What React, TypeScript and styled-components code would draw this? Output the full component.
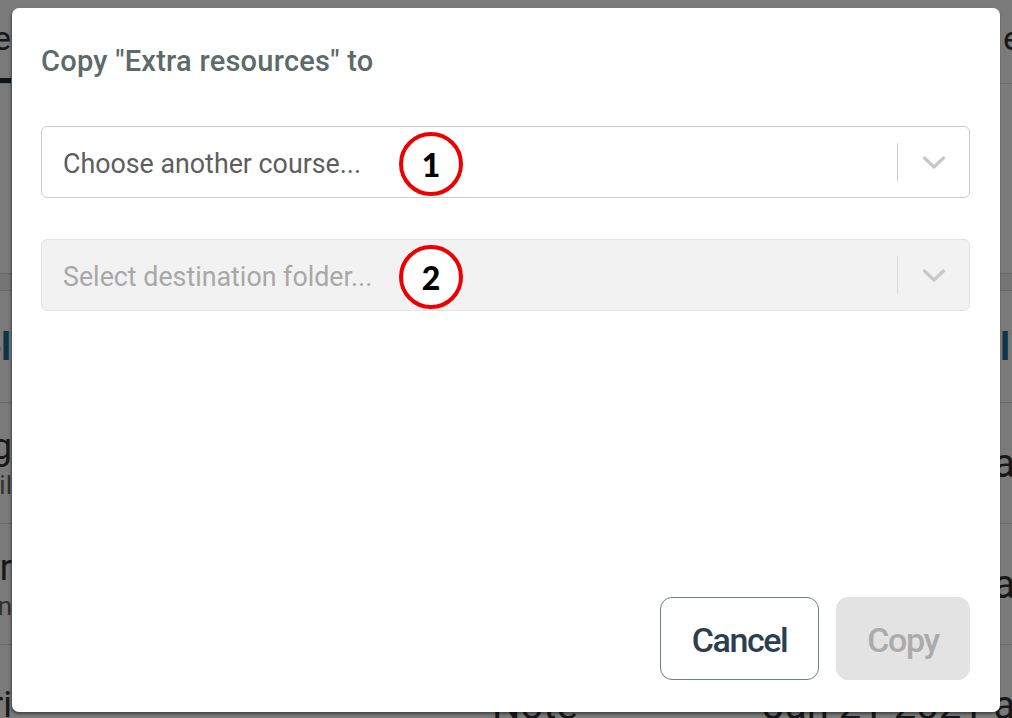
import React from "react";
import styled, { createGlobalStyle } from "styled-components";

const GlobalStyle = createGlobalStyle`
  html, body { margin: 0; padding: 0; width: 1012px; height: 718px; overflow: hidden; background: #ffffff; }
  #root { width: 1012px; height: 718px; }
  * { box-sizing: border-box; }
`;

const Screen = styled.div`
  position: relative;
  width: 1012px;
  height: 718px;
  overflow: hidden;
  background: #ffffff;
  font-family: Roboto, "Liberation Sans", sans-serif;
`;

/* ---------- background page (dimmed) ---------- */
const Page = styled.div`
  display: flex;
  flex-direction: column;
  width: 100%;
`;

const TabBar = styled.div`
  height: 84px;
  display: flex;
  justify-content: space-between;
  align-items: flex-start;
  border-bottom: 1px solid #e2e2e2;
`;

const Tab = styled.div<{ $side: "left" | "right"; $active?: boolean }>`
  width: ${(p) => (p.$side === "left" ? "11px" : "9px")};
  height: 83px;
  display: flex;
  justify-content: ${(p) => (p.$side === "left" ? "flex-end" : "flex-start")};
  align-items: flex-start;
  padding-top: 18px;
  white-space: nowrap;
  font-size: 34px;
  color: #333;
  border-bottom: 5px solid ${(p) => (p.$active ? "#1c2a35" : "transparent")};
`;

const Toolbar = styled.div`
  height: 190px;
  border-bottom: 1px solid #d8d8d8;
`;

const Strip = styled.div`
  height: 17px;
  background: #f4f4f4;
  border-bottom: 1px solid #d8d8d8;
`;

const HeaderRow = styled.div`
  height: 112px;
  display: flex;
  justify-content: space-between;
  align-items: center;
  border-bottom: 1px solid #d8d8d8;
`;

const HeaderCell = styled.div<{ $side: "left" | "right" }>`
  width: ${(p) => (p.$side === "left" ? "11px" : "12px")};
  display: flex;
  justify-content: ${(p) => (p.$side === "left" ? "flex-end" : "flex-start")};
  white-space: nowrap;
  font-size: 38px;
  font-weight: 700;
  color: #1f6e9c;
`;

const Row = styled.div`
  height: 121px;
  display: grid;
  grid-template-columns: 12px 480px 271px 1fr;
  align-items: center;
  border-bottom: 1px solid #d8d8d8;
`;

const NameCell = styled.div`
  display: flex;
  flex-direction: column;
  align-items: flex-end;
  white-space: nowrap;
`;

const NameTitle = styled.span`
  font-size: 36px;
  color: #333;
  line-height: 44px;
`;

const NameSub = styled.span`
  font-size: 26px;
  color: #666;
  line-height: 32px;
`;

const PlainCell = styled.div`
  font-size: 40px;
  color: #333;
  white-space: nowrap;
`;

/* ---------- modal ---------- */
const Overlay = styled.div`
  position: absolute;
  inset: 0;
  background: rgba(0, 0, 0, 0.52);
  display: flex;
  padding: 8px 12px 6px 12px;
`;

const Dialog = styled.div`
  flex: 1;
  background: #ffffff;
  border-radius: 7px;
  box-shadow: -1px 2px 3px rgba(0, 0, 0, 0.45);
  display: flex;
  flex-direction: column;
  padding: 36px 30px 32px 29px;
`;

const Title = styled.h2`
  margin: 0 0 48px;
  font-family: Roboto, "Liberation Sans", sans-serif;
  font-size: 29px;
  line-height: 34px;
  font-weight: 500;
  letter-spacing: 0.25px;
  color: #5c6b69;
`;

const Fields = styled.div`
  display: flex;
  flex-direction: column;
  gap: 41px;
`;

const SelectBox = styled.div<{ $disabled?: boolean }>`
  position: relative;
  height: 72px;
  display: flex;
  align-items: center;
  border: 1px solid ${(p) => (p.$disabled ? "#e4e4e4" : "#cccccc")};
  border-radius: 6px;
  background: ${(p) => (p.$disabled ? "#f2f2f2" : "#ffffff")};
`;

const Placeholder = styled.div<{ $disabled?: boolean }>`
  flex: 1;
  padding: 3px 0 0 21px;
  font-size: 26.8px;
  color: ${(p) => (p.$disabled ? "#a8a8a8" : "#5e5e5e")};
  white-space: nowrap;
`;

const Separator = styled.span<{ $disabled?: boolean }>`
  width: 1px;
  height: 38px;
  background: ${(p) => (p.$disabled ? "#dddddd" : "#cccccc")};
`;

const IndicatorBox = styled.div`
  width: 71px;
  display: flex;
  justify-content: center;
  align-items: center;
  padding-top: 1px;
`;

const Marker = styled.div`
  position: absolute;
  left: 357px;
  top: 5px;
  width: 64px;
  height: 64px;
  border-radius: 50%;
  border: 4px solid #ee0000;
  background: #ffffff;
  display: flex;
  align-items: center;
  justify-content: center;
  font-family: Lato, "Open Sans", sans-serif;
  font-weight: 900;
  font-size: 32px;
  color: #000;
  padding-top: 1px;
`;

const Footer = styled.div`
  margin-top: auto;
  display: flex;
  justify-content: flex-end;
  gap: 17px;
`;

const Button = styled.button<{ $variant: "outline" | "disabled" }>`
  height: 83px;
  width: ${(p) => (p.$variant === "outline" ? "159px" : "134px")};
  border-radius: 12px;
  border: 1px solid ${(p) => (p.$variant === "outline" ? "#6d7d89" : "#e3e3e3")};
  background: ${(p) => (p.$variant === "outline" ? "#ffffff" : "#e3e3e3")};
  color: ${(p) => (p.$variant === "outline" ? "#2b3f4e" : "#ababab")};
  font-family: Roboto, "Liberation Sans", sans-serif;
  font-size: 34px;
  font-weight: 500;
  letter-spacing: -1.4px;
  padding: 0;
  padding-top: 2px;
  cursor: ${(p) => (p.$variant === "outline" ? "pointer" : "default")};
`;

const Chevron: React.FC<{ color: string }> = ({ color }) => (
  <svg width="24" height="15" viewBox="0 0 24 15" fill="none">
    <path d="M2.5 3 L12 12 L21.5 3" stroke={color} strokeWidth="3.2" strokeLinecap="round" strokeLinejoin="round" />
  </svg>
);

const Select: React.FC<{ placeholder: string; disabled?: boolean; marker: string }> = ({
  placeholder,
  disabled,
  marker,
}) => (
  <SelectBox $disabled={disabled}>
    <Placeholder $disabled={disabled}>{placeholder}</Placeholder>
    <Separator $disabled={disabled} />
    <IndicatorBox>
      <Chevron color="#c8c8c8" />
    </IndicatorBox>
    <Marker>{marker}</Marker>
  </SelectBox>
);

const rows = [
  { title: "Reading", sub: "Detail", type: "Folder" },
  { title: "Chapter", sub: "Main", type: "Folder" },
  { title: "Theori", sub: "", type: "Note" },
];

export default function App() {
  return (
    <>
      <GlobalStyle />
      <Screen>
        <Page>
          <TabBar>
            <Tab $side="left" $active>
              Resource
            </Tab>
            <Tab $side="right">ettings</Tab>
          </TabBar>
          <Toolbar />
          <Strip />
          <HeaderRow>
            <HeaderCell $side="left">Label</HeaderCell>
            <HeaderCell $side="right">links</HeaderCell>
          </HeaderRow>
          {rows.map((r) => (
            <Row key={r.title}>
              <NameCell>
                <NameTitle>{r.title}</NameTitle>
                {r.sub && <NameSub>{r.sub}</NameSub>}
              </NameCell>
              <span />
              <PlainCell>{r.type}</PlainCell>
              <PlainCell>Jan 21 2021 at 10:42</PlainCell>
            </Row>
          ))}
        </Page>

        <Overlay>
          <Dialog role="dialog">
            <Title>Copy "Extra resources" to</Title>
            <Fields>
              <Select placeholder="Choose another course..." marker="1" />
              <Select placeholder="Select destination folder..." disabled marker="2" />
            </Fields>
            <Footer>
              <Button $variant="outline">Cancel</Button>
              <Button $variant="disabled" disabled>
                Copy
              </Button>
            </Footer>
          </Dialog>
        </Overlay>
      </Screen>
    </>
  );
}
